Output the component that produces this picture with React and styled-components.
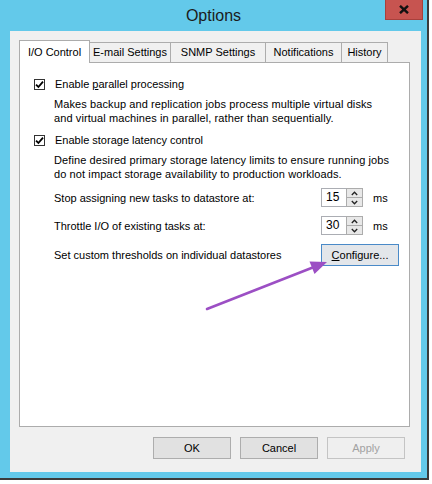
import React from 'react';
import styled, { createGlobalStyle } from 'styled-components';

const Global = createGlobalStyle`
  html, body { margin: 0; padding: 0; background: #ffffff; }
  body {
    font-family: "Liberation Sans", Arial, sans-serif;
    font-size: 11px;
    color: #000;
  }
  * { box-sizing: border-box; }
`;

const Window = styled.div`
  width: 429px;
  height: 480px;
  background: #63c9ea;
  border-right: 2px solid #3b3b3b;
  border-bottom: 2px solid #3b3b3b;
  display: flex;
  flex-direction: column;
`;

const TitleBar = styled.div`
  height: 31px;
  flex: none;
  display: grid;
  grid-template-columns: 1fr auto 1fr;
`;

const Title = styled.div`
  grid-column: 2;
  line-height: 31px;
  font-size: 16px;
  color: #1b1b1b;
`;

const CloseButton = styled.div`
  grid-column: 3;
  justify-self: end;
  align-self: start;
  width: 38px;
  height: 20px;
  margin-right: 4px;
  background: #c75450;
  border: 1px solid #a8403c;
  border-top: none;
  display: flex;
  align-items: center;
  justify-content: center;
`;

const Client = styled.div`
  flex: 1;
  margin: 0 6px 6px 10px;
  background: #f0f0f0;
  padding: 10px 11px 13px 9px;
  display: flex;
  flex-direction: column;
`;

const TabStrip = styled.div`
  display: flex;
  align-items: flex-end;
  height: 22px;
  flex: none;
  position: relative;
  z-index: 1;
  margin-bottom: -1px;
`;

const Tab = styled.div`
  width: ${p => p.$w}px;
  height: ${p => (p.$active ? 23 : 21)}px;
  padding-bottom: 1px;
  margin-left: ${p => (p.$first ? 0 : -1)}px;
  background: ${p => (p.$active ? '#ffffff' : '#f0f0f0')};
  border: 1px solid #acacac;
  border-bottom: ${p => (p.$active ? 'none' : '1px solid #acacac')};
  display: flex;
  align-items: center;
  justify-content: center;
  color: #000;
  white-space: nowrap;
`;

const Panel = styled.div`
  flex: 1;
  position: relative;
  background: #ffffff;
  border: 1px solid #acacac;
  padding: 14px 0 0 14px;
`;

const CheckRow = styled.div`
  display: flex;
  align-items: center;
  height: 14px;
  line-height: 14px;
  margin-top: ${p => p.$mt || 0}px;
`;

const Box = styled.span`
  width: 11px;
  height: 11px;
  border: 1px solid #333;
  background: #fff;
  margin-right: 10px;
  display: flex;
  align-items: center;
  justify-content: center;
  flex: none;
`;

const Desc = styled.div`
  margin: 6px 0 0 20px;
  line-height: 14px;
  letter-spacing: 0.1px;
`;

const Fields = styled.div`
  margin: 7px 0 0 20px;
  display: grid;
  grid-template-columns: 257px 42px auto;
  column-gap: 10px;
  row-gap: 9px;
  align-items: center;
`;

const Spinner = styled.div`
  display: flex;
  height: 19px;
  width: 42px;
`;

const SpinInput = styled.div`
  width: 25px;
  border: 1px solid #abadb3;
  border-right: none;
  background: #fff;
  padding-left: 4px;
  line-height: 17px;
  font-size: 12px;
`;

const SpinButtons = styled.div`
  width: 17px;
  display: flex;
  flex-direction: column;
`;

const SpinButton = styled.div`
  flex: 1;
  background: #e8e8e8;
  border: 1px solid #acacac;
  margin-top: ${p => (p.$down ? -1 : 0)}px;
  display: flex;
  align-items: center;
  justify-content: center;
`;

const Button = styled.div`
  width: 78px;
  height: 22px;
  background: ${p => (p.$disabled ? '#efefef' : p.$focus ? '#e3e6ea' : '#e1e1e1')};
  border: 1px solid ${p => (p.$disabled ? '#c4c4c4' : p.$focus ? '#4a8ac8' : '#adadad')};
  color: ${p => (p.$disabled ? '#a2a2a2' : '#000')};
  display: flex;
  align-items: center;
  justify-content: center;
  justify-self: start;
  grid-column: ${p => (p.$span ? '2 / span 2' : 'auto')};
`;

const ButtonRow = styled.div`
  display: flex;
  justify-content: flex-end;
  gap: 9px;
  margin-top: 10px;
  padding-right: 5px;
  flex: none;
`;

const Annotation = styled.svg`
  position: absolute;
  left: 0;
  top: 0;
  width: 100%;
  height: 100%;
  pointer-events: none;
  overflow: visible;
`;

const Check = () => (
  <svg width="9" height="9" viewBox="0 0 9 9">
    <path d="M1 4.6 L3.4 7 L8 1.6" fill="none" stroke="#000" strokeWidth="1.8" />
  </svg>
);

const Chevron = ({ down }) => (
  <svg width="7" height="5" viewBox="0 0 7 5">
    <path
      d={down ? 'M0.8 1 L3.5 3.8 L6.2 1' : 'M0.8 4 L3.5 1.2 L6.2 4'}
      fill="none"
      stroke="#222"
      strokeWidth="1.3"
    />
  </svg>
);

const Spin = ({ value }) => (
  <Spinner>
    <SpinInput>{value}</SpinInput>
    <SpinButtons>
      <SpinButton><Chevron /></SpinButton>
      <SpinButton $down><Chevron down /></SpinButton>
    </SpinButtons>
  </Spinner>
);

export default function App() {
  return (
    <>
      <Global />
      <Window>
        <TitleBar>
          <Title>Options</Title>
          <CloseButton>
            <svg width="10" height="9" viewBox="0 0 10 9">
              <path d="M1 0.8 L9 8.2 M9 0.8 L1 8.2" stroke="#111" strokeWidth="2.4" />
            </svg>
          </CloseButton>
        </TitleBar>
        <Client>
          <TabStrip>
            <Tab $w={71} $active $first>I/O Control</Tab>
            <Tab $w={82}>E-mail Settings</Tab>
            <Tab $w={96}>SNMP Settings</Tab>
            <Tab $w={77}>Notifications</Tab>
            <Tab $w={47}>History</Tab>
          </TabStrip>
          <Panel>
            <CheckRow>
              <Box><Check /></Box>
              <span>Enable <u>p</u>arallel processing</span>
            </CheckRow>
            <Desc>
              Makes backup and replication jobs process multiple virtual disks
              <br />
              and virtual machines in parallel, rather than sequentially.
            </Desc>
            <CheckRow $mt={8}>
              <Box><Check /></Box>
              <span>Enable storage latency control</span>
            </CheckRow>
            <Desc>
              Define desired primary storage latency limits to ensure running jobs
              <br />
              do not impact storage availability to production workloads.
            </Desc>
            <Fields>
              <span>Stop assigning new tasks to datastore at:</span>
              <Spin value="15" />
              <span>ms</span>
              <span>Throttle I/O of existing tasks at:</span>
              <Spin value="30" />
              <span>ms</span>
              <span>Set custom thresholds on individual datastores</span>
              <Button $focus $span><span><u>C</u>onfigure...</span></Button>
            </Fields>
            <Annotation>
              <line x1="187" y1="246" x2="294" y2="204" stroke="#9c4fc4" strokeWidth="2.6" strokeLinecap="round" />
              <polygon points="307,199 294.5,211 289.5,198.5" fill="#9c4fc4" />
            </Annotation>
          </Panel>
          <ButtonRow>
            <Button>OK</Button>
            <Button>Cancel</Button>
            <Button $disabled>Apply</Button>
          </ButtonRow>
        </Client>
      </Window>
    </>
  );
}
